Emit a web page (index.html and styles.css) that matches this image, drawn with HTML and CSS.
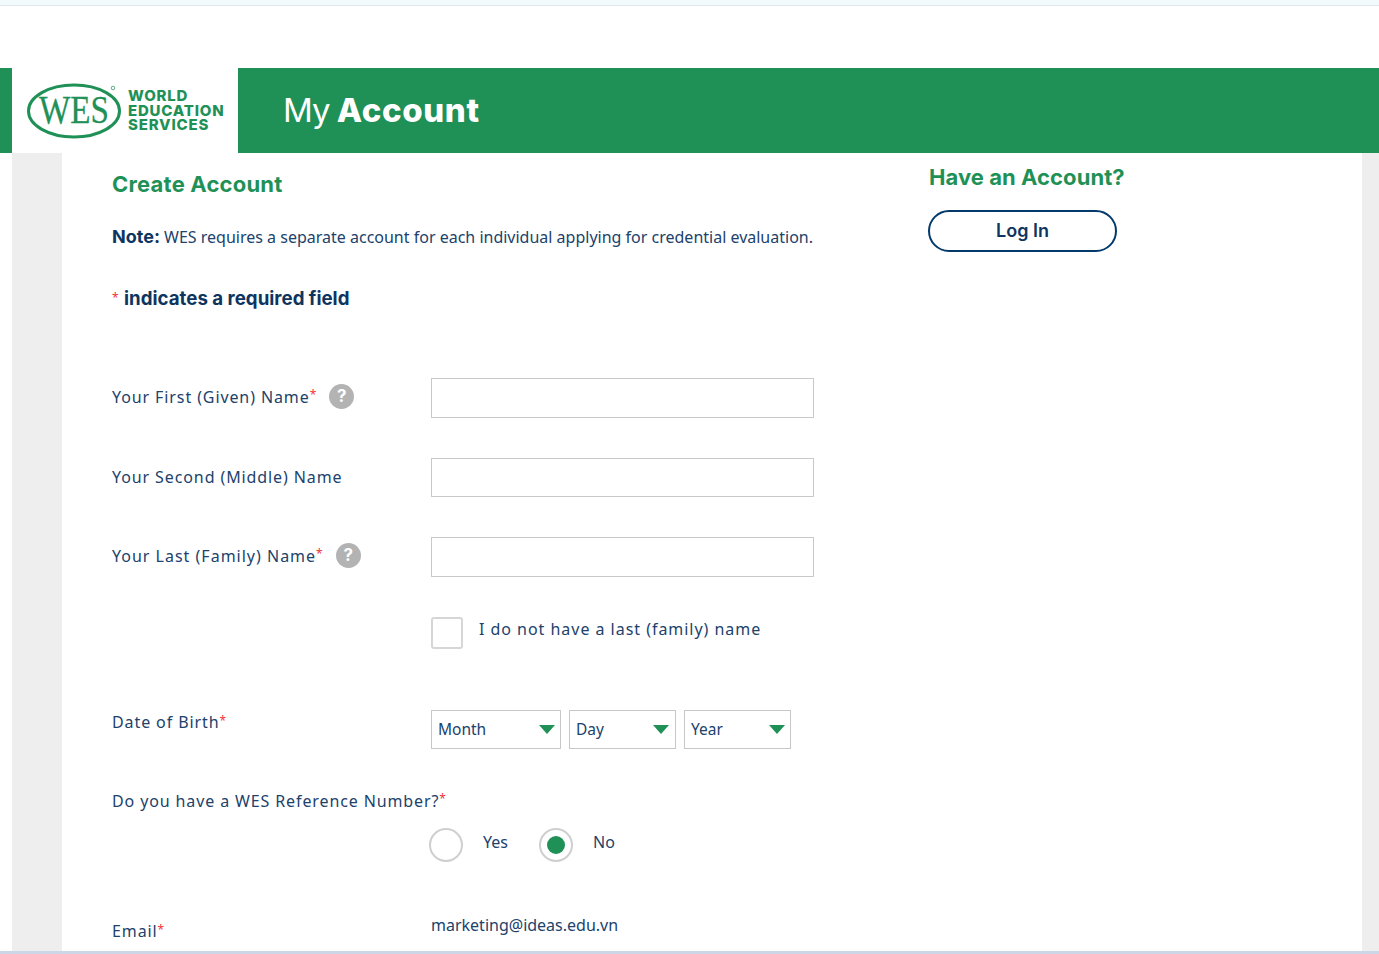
FILE: index.html
```html
<!DOCTYPE html>
<html lang="en">
<head>
<meta charset="utf-8">
<title>My Account</title>
<link rel="stylesheet" href="styles.css">
</head>
<body>
<div class="top-strip"></div>
<header class="banner">
  <div class="logo">
    <svg class="logo-mark" width="96" height="58" viewBox="0 0 96 58">
      <ellipse cx="47" cy="29" rx="45.5" ry="26" fill="none" stroke="#1f9157" stroke-width="3"></ellipse>
      <circle cx="86" cy="6" r="1.8" fill="none" stroke="#1f9157" stroke-width=".7"></circle>
      <text x="47" y="41" text-anchor="middle" class="logo-wes" textLength="70" lengthAdjust="spacingAndGlyphs">WES</text>
    </svg>
    <div class="logo-name"><span class="logo-line">WORLD</span><span class="logo-line">EDUCATION</span><span class="logo-line">SERVICES</span></div>
  </div>
  <h1 class="banner-title"><span class="my">My</span> <b>Account</b></h1>
</header>
<div class="page">
  <div class="gutter"></div>
  <main class="content">
    <section class="form-col">
      <h2 class="heading create">Create Account</h2>
      <p class="note"><b>Note:</b> WES requires a separate account for each individual applying for credential evaluation.</p>
      <p class="req"><span class="star">*</span> indicates a required field</p>
      <div class="row first">
        <label class="lbl">Your First (Given) Name<span class="star">*</span><span class="help">?</span></label>
        <input class="field" type="text">
      </div>
      <div class="row second">
        <label class="lbl">Your Second (Middle) Name</label>
        <input class="field short" type="text">
      </div>
      <div class="row third">
        <label class="lbl">Your Last (Family) Name<span class="star">*</span><span class="help">?</span></label>
        <input class="field" type="text">
      </div>
      <div class="row check-row">
        <span class="lbl"></span>
        <span class="check"></span>
        <span class="check-text">I do not have a last (family) name</span>
      </div>
      <div class="row dob">
        <span class="lbl">Date of Birth<span class="star">*</span></span>
        <div class="selects">
          <div class="sel month">Month</div>
          <div class="sel day">Day</div>
          <div class="sel year">Year</div>
        </div>
      </div>
      <div class="ref-q">Do you have a WES Reference Number?<span class="star">*</span></div>
      <div class="radios">
        <span class="radio"></span><span class="radio-text yes">Yes</span>
        <span class="radio on"></span><span class="radio-text">No</span>
      </div>
      <div class="row email">
        <span class="lbl">Email<span class="star">*</span></span>
        <span class="email-val">marketing@ideas.edu.vn</span>
      </div>
    </section>
    <aside class="side-col">
      <h2 class="heading have">Have an Account?</h2>
      <a class="login">Log In</a>
    </aside>
  </main>
  <div class="gutter right"></div>
</div>
<div class="bottom-strip"></div>
</body>
</html>
```
FILE: styles.css
```css
* { box-sizing: border-box; }
html, body { margin: 0; height: 100%; }
body {
  height: 954px;
  overflow: hidden;
  display: flex;
  flex-direction: column;
  background: #fff;
  color: #20426b;
  font-family: "Noto Sans", "Open Sans", sans-serif;
}
.top-strip {
  height: 6px;
  flex: none;
  background: #f2fafc;
  border-bottom: 1px solid #dce8ea;
}
.banner {
  flex: none;
  margin-top: 62px;
  height: 85px;
  display: flex;
  background: #1f9157;
  padding-left: 12px;
}
.logo {
  width: 226px;
  background: #fff;
  display: flex;
  align-items: center;
  padding-left: 15px;
}
.logo-mark { flex: none; margin-top: 1px; }
.logo-wes {
  font-family: "Liberation Serif", serif;
  font-size: 39px;
  fill: #1f9157;
  stroke: #1f9157;
  stroke-width: .3px;
}
.logo-name {
  margin-left: 5px;
  margin-top: 1px;
  font-family: Inter, sans-serif;
  font-weight: 800;
  font-size: 15px;
  letter-spacing: .8px;
  color: #1f9157;
}
.logo-line { display: block; height: 14.4px; line-height: 14.4px; }
.banner-title {
  margin: 0 0 0 45px;
  font-family: Inter, sans-serif;
  font-weight: 400;
  font-size: 33px;
  line-height: 85px;
  color: #fff;
  word-spacing: -2px;
}
.my { letter-spacing: -1px; }
.banner-title b { font-weight: 800; letter-spacing: .6px; }
.page {
  flex: 1;
  min-height: 0;
  display: flex;
  margin-left: 12px;
  overflow: hidden;
}
.gutter { width: 50px; flex: none; background: #eee; }
.gutter.right { width: 17px; }
.content {
  flex: 1;
  display: flex;
  padding-left: 50px;
}
.form-col { width: 817px; flex: none; }
.side-col { padding-top: 11px; }
.heading {
  margin: 0;
  font-family: Inter, sans-serif;
  font-weight: 700;
  font-size: 22px;
  line-height: 27px;
  color: #1f9157;
}
.create { margin-top: 18px; letter-spacing: .2px; }
.have { letter-spacing: .06px; }
.note {
  margin: 27px 0 0;
  font-size: 16px;
  line-height: 24px;
  white-space: nowrap;
}
.note b { font-family: Inter, sans-serif; font-weight: 700; font-size: 18px; color: #0e3560; }
.req {
  margin: 38px 0 0;
  font-family: Inter, sans-serif;
  font-weight: 700;
  font-size: 18.7px;
  line-height: 24px;
  color: #0e3560;
}
.req .star { margin-right: 1px; }
.star { color: #f0343c; font-family: "Noto Sans", sans-serif; font-weight: 400; font-size: 12px; vertical-align: 3px; line-height: 1; }
.row { display: flex; }
.lbl {
  width: 319px;
  flex: none;
  font-size: 16px;
  line-height: 24px;
  letter-spacing: .9px;
  display: flex;
  align-items: center;
  align-self: flex-start;
}
.lbl .star { align-self: flex-start; margin-top: 5px; }
.first { margin-top: 67px; }
.second { margin-top: 40px; }
.third { margin-top: 40px; }
.first .lbl, .third .lbl { padding-top: 6px; }
.third .lbl { letter-spacing: 1px; }
.second .lbl { padding-top: 7px; }
.help {
  width: 25px;
  height: 25px;
  margin-left: 12px;
  border-radius: 50%;
  background: #b3b3b3;
  color: #fff;
  font-family: Inter, sans-serif;
  font-weight: 700;
  font-size: 17px;
  line-height: 25px;
  text-align: center;
  letter-spacing: 0;
}
.field {
  width: 383px;
  height: 40px;
  border: 1px solid #c8c8c8;
  background: #fff;
  padding: 0;
}
.field.short { height: 39px; }
.check-row { margin-top: 40px; }
.check {
  width: 32px;
  height: 32px;
  flex: none;
  border: 2px solid #d6d6d6;
  border-radius: 3px;
}
.check-text {
  margin-left: 16px;
  font-size: 16px;
  line-height: 24px;
  letter-spacing: .97px;
}
.dob { margin-top: 61px; }
.selects { display: flex; gap: 8px; }
.sel {
  position: relative;
  height: 39px;
  border: 1px solid #c8c8c8;
  padding-left: 6px;
  font-size: 15.5px;
  line-height: 37px;
}
.sel::after {
  content: "";
  position: absolute;
  top: 14px;
  right: 5px;
  border-left: 8.5px solid transparent;
  border-right: 8.5px solid transparent;
  border-top: 9px solid #1f9157;
}
.month::after { right: 5.5px; }
.day::after { right: 6px; }
.month { width: 130px; }
.day { width: 107px; }
.year { width: 107px; }
.ref-q {
  margin-top: 40px;
  font-size: 16px;
  line-height: 24px;
  letter-spacing: .88px;
}
.ref-q .star { vertical-align: 4px; }
.radios {
  display: flex;
  align-items: flex-start;
  margin: 15px 0 0 317px;
}
.radio {
  width: 34px;
  height: 34px;
  flex: none;
  border: 2.5px solid #cfcfcf;
  border-radius: 50%;
  display: flex;
  align-items: center;
  justify-content: center;
}
.radio.on::before {
  content: "";
  width: 18px;
  height: 18px;
  border-radius: 50%;
  background: #1f9157;
}
.radio-text {
  margin-left: 20px;
  font-size: 16px;
  line-height: 28px;
}
.radio-text.yes { width: 56px; }
.email { margin-top: 49px; }
.email .lbl { padding-top: 8px; }
.email-val { font-size: 16px; line-height: 26px; padding-top: 1px; }
.login {
  display: block;
  width: 189px;
  height: 42px;
  margin: 19px 0 0 -1px;
  border: 2px solid #043a6b;
  border-radius: 21px;
  font-family: Inter, sans-serif;
  font-weight: 600;
  font-size: 18px;
  line-height: 38px;
  text-align: center;
  color: #0e3560;
}
.bottom-strip {
  height: 3px;
  flex: none;
  background: #ccd6e6;
}
```
